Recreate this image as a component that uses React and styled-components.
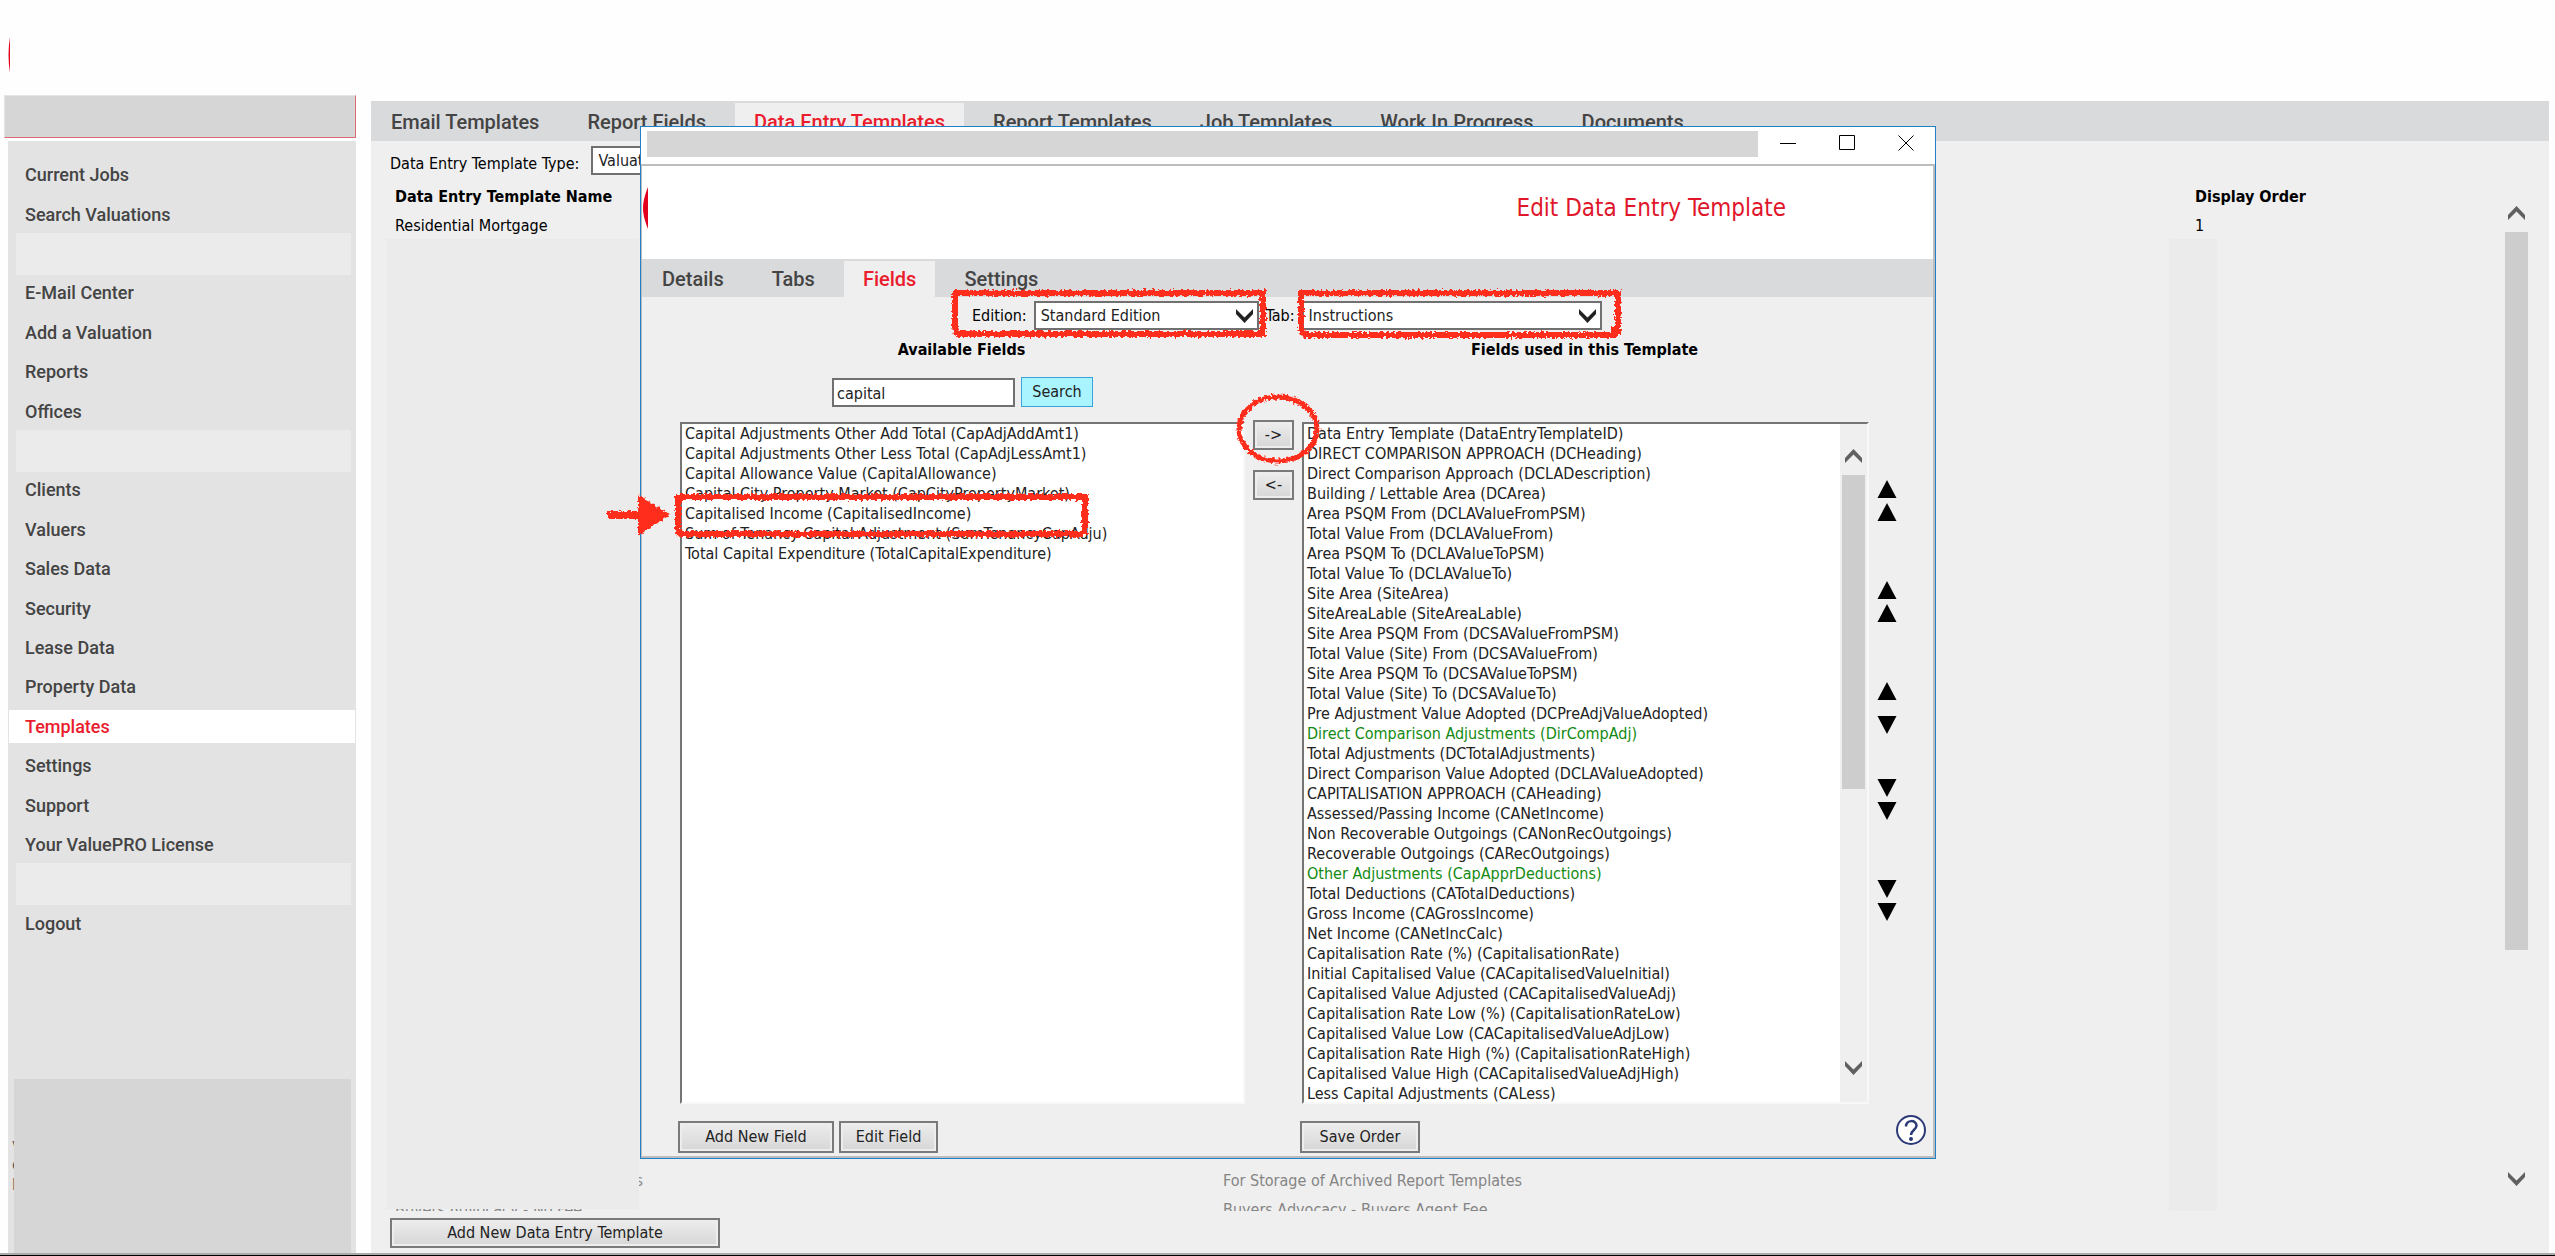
import React from 'react';
import styled, { createGlobalStyle } from 'styled-components';

const GlobalStyle = createGlobalStyle`
  * {
    box-sizing: border-box;
  }

  body {
    margin: 0;
    background: #fefefe;
    color: #000;
    font-family: "DejaVu Sans Condensed", "DejaVu Sans", sans-serif;
    font-size: 16px;
    line-height: 20px;
  }

  button, input, select {
    font: inherit;
    margin: 0;
  }
`;

const Page = styled.div`
  position: relative;
  display: flex;
  flex-direction: column;
  height: 100vh;
  min-height: 1256px;
  overflow: hidden;
  border-bottom: 1px solid #000;
`;

const Banner = styled.header`
  flex: none;
  height: 95px;
  padding: 37px 8px 0;
`;

const Columns = styled.div`
  flex: 1;
  min-height: 0;
  display: flex;
  gap: 15px;
  padding: 0 6px 0 4px;
  border-bottom: 2px solid #aaa;
`;

/* ---- left menu ---- */

const Side = styled.aside`
  flex: none;
  width: 352px;
  display: flex;
  flex-direction: column;
`;

const UserBox = styled.div`
  height: 43px;
  margin-bottom: 3px;
  background: #d6d6d6;
  border: 1px solid #e6e6e6;
  border-right-color: #dc6a74;
  border-bottom-color: #dc6a74;
`;

const Menu = styled.nav`
  flex: 1;
  display: flex;
  flex-direction: column;
  justify-content: space-between;
  margin-left: 4px;
  padding-top: 14px;
  background: #e3e3e3;
`;

const MenuList = styled.ul`
  height: 788px;
  margin: 0;
  padding: 0 1px;
  list-style: none;
  display: grid;
  grid-template-rows: repeat(20, minmax(0, 1fr));
  align-items: center;
`;

const MenuLink = styled.a`
  display: block;
  padding: 0 16px;
  background: ${p => (p.$active ? '#fff' : 'transparent')};
  color: ${p => (p.$active ? '#ea1c2d' : '#444')};
  font-family: Roboto, sans-serif;
  font-size: 18px;
  font-weight: 500;
  line-height: 33px;
  text-decoration: none;
`;

const MenuBlank = styled.div`
  height: 42px;
  margin: 0 4px 0 7px;
  background: #ebebeb;
`;

const MenuFoot = styled.div`
  display: flex;
  height: 174px;
  padding: 0 5px 0 4px;
`;

const FootText = styled.div`
  width: 2px;
  padding-top: 56px;
  overflow: hidden;
  color: #555;
`;

const FootBlock = styled.div`
  flex: 1;
  background: #d6d6d6;
`;

/* ---- tabs, shared by page and dialog ---- */

const TabBar = styled.nav`
  flex: none;
  display: flex;
  gap: 10px;
  height: ${p => p.$height}px;
  padding: 2px 0 0 1px;
  background: #d9dadc;
`;

const Tab = styled.a`
  display: flex;
  align-items: center;
  padding: 0 19px;
  background: ${p => (p.$active ? '#efefef' : 'transparent')};
  color: ${p => (p.$active ? '#ea1c2d' : '#444')};
  font-family: Roboto, sans-serif;
  font-size: 20px;
  font-weight: 500;
  text-decoration: none;
  white-space: nowrap;
`;

/* ---- form parts ---- */

const Button = styled.button`
  height: ${p => p.$height || 32}px;
  width: ${p => (p.$width ? `${p.$width}px` : 'auto')};
  padding: 0;
  border: 2px solid #7a7a7a;
  background: linear-gradient(#ededed, #d6d6d6);
  box-shadow: inset 0 0 0 2px #ededed;
  color: #222;
`;

const SearchButton = styled(Button)`
  border: 1px solid #3aa5dc;
  background: #a9f4ff;
  box-shadow: none;
`;

const SelectWrap = styled.span`
  position: relative;
  display: inline-flex;
  width: ${p => p.$width}px;

  svg {
    position: absolute;
    right: 6px;
    top: 8px;
    pointer-events: none;
  }
`;

const SelectBox = styled.select`
  appearance: none;
  width: 100%;
  height: 29px;
  padding: 0 5px;
  border: 2px solid #707070;
  border-radius: 0;
  background: #fff;
  color: #222;
`;

const TextBox = styled.input`
  width: 183px;
  height: 29px;
  padding: 2px 3px 0;
  border: 2px solid #707070;
  color: #222;
`;

/* ---- page behind the dialog ---- */

const Main = styled.main`
  flex: 1;
  min-width: 0;
  display: flex;
  flex-direction: column;
  margin-top: 6px;
  background: #efefef;
`;

const FilterRow = styled.div`
  display: flex;
  align-items: flex-end;
  gap: 12px;
  padding: 5px 19px 7px;
  line-height: 22px;
`;

const TablePane = styled.div`
  flex: 1 1 0;
  min-height: 0;
  display: flex;
  gap: 15px;
  padding: 0 21px 0 16px;
`;

const TableClip = styled.div`
  position: relative;
  flex: 1;
  overflow: hidden;
`;

const Table = styled.table`
  width: 100%;
  table-layout: fixed;
  border-collapse: collapse;
  text-align: left;

  th, td {
    height: 29px;
    padding: 0 8px;
  }
`;

const NameCol = styled.col`
  width: 828px;
`;

const OrderCol = styled.col`
  width: 303px;
`;

const HiddenRows = styled.tr`
  height: 926px;
`;

const GreyRow = styled.tr`
  color: #858585;
`;

const TailText = styled.span`
  display: block;
  width: 248px;
  text-align: right;
`;

const NameCover = styled.div`
  position: absolute;
  top: 57px;
  bottom: 2px;
  left: 0;
  width: 252px;
  background: #ebebeb;
`;

const OrderCover = styled(NameCover)`
  left: auto;
  right: 273px;
  width: 48px;
  bottom: 0;
`;

const PageActions = styled.div`
  padding: 7px 19px 5px;
`;

const ScrollTrack = styled.div`
  flex: none;
  display: flex;
  flex-direction: column;
  align-items: center;
  width: ${p => p.$width}px;
  padding: ${p => p.$pad};
  background: #efefef;
`;

const Thumb = styled.div`
  width: 23px;
  height: ${p => p.$height}px;
  margin: 12px 0 auto;
  background: #cdcdcd;
`;

/* ---- dialog ---- */

const Dialog = styled.section`
  position: absolute;
  top: 126px;
  left: 640px;
  width: 1296px;
  display: flex;
  flex-direction: column;
  border: 1px solid #1f80c8;
  background: #fff;
`;

const TitleBar = styled.div`
  display: flex;
  align-items: center;
  height: 37px;
  padding-left: 6px;
`;

const TitleText = styled.div`
  flex: 1;
  height: 26px;
  margin-bottom: 3px;
  background: #d6d6d6;
`;

const WindowButton = styled.button`
  width: 59px;
  height: 36px;
  padding: 0;
  border: 0;
  background: none;
`;

const DialogBody = styled.div`
  border: 2px solid #bdbdbd;
  border-left-width: 1px;
`;

const DialogHeader = styled.header`
  display: flex;
  align-items: center;
  justify-content: space-between;
  height: 93px;
  padding: 0 147px 10px 1px;
`;

const DialogTitle = styled.h1`
  margin: 0;
  color: #e0162b;
  font-size: 24px;
  font-weight: 400;
  line-height: 30px;
`;

const Fields = styled.form`
  padding: 4px 7px 3px 36px;
  background: #efefef;
`;

const Pickers = styled.div`
  display: flex;
  align-items: center;
  gap: 7px;
  padding-left: 294px;
`;

const FieldGrid = styled.div`
  display: grid;
  grid-template-columns: 567px 55px 569px 1fr;
  grid-template-rows: 40px 50px auto 49px;
`;

const Heading = styled.h2`
  margin: 0;
  font-size: 16px;
  line-height: 40px;
  text-align: center;
`;

const SearchRow = styled.div`
  display: flex;
  align-items: center;
  justify-content: center;
  gap: 6px;
  padding: 0 0 6px 2px;
`;

const MoveButtons = styled.div`
  display: flex;
  flex-direction: column;
  align-items: center;
  gap: 20px;
  padding-left: 2px;
`;

const ListFrame = styled.div`
  display: flex;
  margin: 2px 0 0 2px;
  height: 682px;
  border: 2px solid #f8f8f8;
  border-top-color: #757575;
  border-left-color: #757575;
`;

const ListBox = styled.select`
  flex: 1;
  height: 100%;
  padding: 0;
  border: 0;
  border-radius: 0;
  outline: 0;
  overflow: hidden;
  background: #fff;
  color: #222;

  option {
    height: 20px;
    min-height: 20px;
    padding: 0 3px;
    line-height: 20px;
  }
`;

const Option = styled.option`
  color: ${p => (p.$group ? '#128a12' : '#222')};
`;

const OrderColumn = styled.div`
  display: flex;
  flex-direction: column;
  gap: 60px;
  padding: 60px 0 0 8px;
`;

const OrderGroup = styled.div`
  display: flex;
  flex-direction: column;
  gap: ${p => (p.$wide ? 16 : 5)}px;
  margin-bottom: ${p => (p.$wide ? -15 : 0)}px;
`;

const OrderButton = styled.button`
  display: block;
  width: 20px;
  height: 18px;
  padding: 0;
  border: 0;
  background: none;

  svg {
    display: block;
  }
`;

const Actions = styled.div`
  display: flex;
  align-items: flex-end;
  gap: 5px;
  ${p => p.$group && `grid-column: span 2;`}
`;

const HelpButton = styled.button`
  align-self: end;
  width: 30px;
  height: 38px;
  margin-left: auto;
  padding: 0;
  border: 0;
  background: none;

  svg {
    display: block;
    margin-bottom: 8px;
  }
`;

const Marks = styled.svg`
  position: absolute;
  inset: 0;
  width: 100%;
  height: 100%;
  overflow: visible;
  pointer-events: none;
`;

const menu = [
  'Current Jobs', 'Search Valuations', null, 'E-Mail Center', 'Add a Valuation',
  'Reports', 'Offices', null, 'Clients', 'Valuers', 'Sales Data', 'Security',
  'Lease Data', 'Property Data', 'Templates', 'Settings', 'Support',
  'Your ValuePRO License', null, 'Logout',
];

const pageTabs = [
  'Email Templates', 'Report Fields', 'Data Entry Templates', 'Report Templates',
  'Job Templates', 'Work In Progress', 'Documents',
];

const dialogTabs = ['Details', 'Tabs', 'Fields', 'Settings'];

const availableFields = [
  'Capital Adjustments Other Add Total (CapAdjAddAmt1)',
  'Capital Adjustments Other Less Total (CapAdjLessAmt1)',
  'Capital Allowance Value (CapitalAllowance)',
  'Capital City Property Market (CapCityPropertyMarket)',
  'Capitalised Income (CapitalisedIncome)',
  'Sum of Tenancy Capital Adjustment (SumTenancyCapAdju)',
  'Total Capital Expenditure (TotalCapitalExpenditure)',
];

const usedFields = [
  'Data Entry Template (DataEntryTemplateID)',
  'DIRECT COMPARISON APPROACH (DCHeading)',
  'Direct Comparison Approach (DCLADescription)',
  'Building / Lettable Area (DCArea)',
  'Area PSQM From (DCLAValueFromPSM)',
  'Total Value From (DCLAValueFrom)',
  'Area PSQM To (DCLAValueToPSM)',
  'Total Value To (DCLAValueTo)',
  'Site Area (SiteArea)',
  'SiteAreaLable (SiteAreaLable)',
  'Site Area PSQM From (DCSAValueFromPSM)',
  'Total Value (Site) From (DCSAValueFrom)',
  'Site Area PSQM To (DCSAValueToPSM)',
  'Total Value (Site) To (DCSAValueTo)',
  'Pre Adjustment Value Adopted (DCPreAdjValueAdopted)',
  'Direct Comparison Adjustments (DirCompAdj)',
  'Total Adjustments (DCTotalAdjustments)',
  'Direct Comparison Value Adopted (DCLAValueAdopted)',
  'CAPITALISATION APPROACH (CAHeading)',
  'Assessed/Passing Income (CANetIncome)',
  'Non Recoverable Outgoings (CANonRecOutgoings)',
  'Recoverable Outgoings (CARecOutgoings)',
  'Other Adjustments (CapApprDeductions)',
  'Total Deductions (CATotalDeductions)',
  'Gross Income (CAGrossIncome)',
  'Net Income (CANetIncCalc)',
  'Capitalisation Rate (%) (CapitalisationRate)',
  'Initial Capitalised Value (CACapitalisedValueInitial)',
  'Capitalised Value Adjusted (CACapitalisedValueAdj)',
  'Capitalisation Rate Low (%) (CapitalisationRateLow)',
  'Capitalised Value Low (CACapitalisedValueAdjLow)',
  'Capitalisation Rate High (%) (CapitalisationRateHigh)',
  'Capitalised Value High (CACapitalisedValueAdjHigh)',
  'Less Capital Adjustments (CALess)',
];

// fields that open a group of their own
const groupFields = ['DirCompAdj', 'CapApprDeductions'];

const orderGroups = [
  ['top', 'up'],
  ['up', 'up'],
  ['up', 'down'],
  ['down', 'down'],
  ['down', 'bottom'],
];

const isUp = dir => dir === 'up' || dir === 'top';

function Chevron({ up, color = '#606060' }) {
  return (
    <svg width="17" height="14" viewBox="0 0 17 14" aria-hidden="true">
      <path
        d={up ? 'M8.5 0 17 9v5L8.5 5.5 0 14V9Z' : 'M8.5 14 17 5V0L8.5 8.5 0 0v5Z'}
        fill={color}
      />
    </svg>
  );
}

function Select({ id, width, value }) {
  return (
    <SelectWrap $width={width}>
      <SelectBox id={id} defaultValue={value}>
        <option>{value}</option>
      </SelectBox>
      <Chevron color="#222" />
    </SelectWrap>
  );
}

function Triangle({ up }) {
  return (
    <svg width="20" height="18" viewBox="0 0 20 18" aria-hidden="true">
      <path d={up ? 'M10 0 19.5 18H.5Z' : 'M.5 0h19L10 18Z'} fill="#000" />
    </svg>
  );
}

function SideMenu() {
  return (
    <Side>
      <UserBox />
      <Menu>
        <MenuList>
          {menu.map((label, i) => (
            <li key={i}>
              {label
                ? <MenuLink href="#" $active={label === 'Templates'}>{label}</MenuLink>
                : <MenuBlank />}
            </li>
          ))}
        </MenuList>
        <MenuFoot>
          <FootText aria-hidden="true">v c l</FootText>
          <FootBlock />
        </MenuFoot>
      </Menu>
    </Side>
  );
}

function TemplatesPage() {
  return (
    <Main>
      <TabBar $height={40}>
        {pageTabs.map(t => (
          <Tab key={t} href="#" $active={t === 'Data Entry Templates'}>{t}</Tab>
        ))}
      </TabBar>

      <FilterRow>
        <label htmlFor="type">Data Entry Template Type:</label>
        <Select id="type" width={240} value="Valuation" />
      </FilterRow>

      <TablePane>
        <TableClip>
          <Table>
            <colgroup>
              <NameCol />
              <col />
              <OrderCol />
            </colgroup>
            <thead>
              <tr>
                <th>Data Entry Template Name</th>
                <th />
                <th>Display Order</th>
              </tr>
            </thead>
            <tbody>
              <tr>
                <td>Residential Mortgage</td>
                <td />
                <td>1</td>
              </tr>
              <HiddenRows><td colSpan={3} /></HiddenRows>
              <GreyRow>
                <td><TailText>s</TailText></td>
                <td>For Storage of Archived Report Templates</td>
                <td />
              </GreyRow>
              <GreyRow>
                <td>Buyers Advocacy - No Fee</td>
                <td>Buyers Advocacy - Buyers Agent Fee</td>
                <td />
              </GreyRow>
            </tbody>
          </Table>
          <NameCover />
          <OrderCover />
        </TableClip>
        <ScrollTrack $width={23} $pad="24px 0 25px">
          <Chevron up />
          <Thumb $height={718} />
          <Chevron />
        </ScrollTrack>
      </TablePane>

      <PageActions>
        <Button $width={330} $height={30}>Add New Data Entry Template</Button>
      </PageActions>
    </Main>
  );
}

// hand-drawn highlights, in the dialog's own coordinates
function Highlights() {
  return (
    <Marks aria-hidden="true">
      <defs>
        <filter
          id="crayon"
          x="-5%"
          y="-20%"
          width="110%"
          height="140%"
          colorInterpolationFilters="sRGB"
        >
          <feTurbulence type="fractalNoise" baseFrequency="0.35" numOctaves="2" seed="4" />
          <feDisplacementMap
            in="SourceGraphic"
            scale="6"
            xChannelSelector="R"
            yChannelSelector="G"
          />
        </filter>
      </defs>
      <g fill="none" stroke="#ff2d1c" strokeWidth="6" filter="url(#crayon)">
        <path d="M312 166h310v41" />
        <path d="M314 165v36l3 6h305v-8" />
        <path d="M658 166h319v42" />
        <path d="M660 165v38l4 5h309v-9" />
        <path d="M35 370h409v37" />
        <path d="M37 369v35l4 3h401" />
        <ellipse cx="637" cy="302" rx="39" ry="32" strokeWidth="5" />
        <path d="M-34 388H0" strokeWidth="8" />
        <path d="M-2 369 27 388-2 407Z" fill="#ff2d1c" strokeWidth="2" />
      </g>
    </Marks>
  );
}

function EditTemplateDialog() {
  return (
    <Dialog role="dialog" aria-label="Edit Data Entry Template">
      <TitleBar>
        <TitleText />
        <WindowButton aria-label="Minimize">
          <svg width="16" height="16" stroke="#000"><path d="M0 8.5h16" /></svg>
        </WindowButton>
        <WindowButton aria-label="Maximize">
          <svg width="16" height="16" stroke="#000" fill="none"><path d="M.5.5h15v14H.5Z" /></svg>
        </WindowButton>
        <WindowButton aria-label="Close">
          <svg width="16" height="16" stroke="#000"><path d="M.5.5l15 15M15.500.5l-15 15" /></svg>
        </WindowButton>
      </TitleBar>

      <DialogBody>
        <DialogHeader>
          <svg width="5" height="42" aria-hidden="true">
            <path d="M5 0C1 10 0 16 0 21s1 11 5 21Z" fill="#e2001f" />
          </svg>
          <DialogTitle>Edit Data Entry Template</DialogTitle>
        </DialogHeader>

        <TabBar $height={38}>
          {dialogTabs.map(t => (
            <Tab key={t} href="#" $active={t === 'Fields'}>{t}</Tab>
          ))}
        </TabBar>

        <Fields onSubmit={e => e.preventDefault()}>
          <Pickers>
            <label htmlFor="edition">Edition:</label>
            <Select id="edition" width={225} value="Standard Edition" />
            <label htmlFor="tab">Tab:</label>
            <Select id="tab" width={300} value="Instructions" />
          </Pickers>

          <FieldGrid>
            <Heading>Available Fields</Heading>
            <span />
            <Heading>Fields used in this Template</Heading>
            <span />

            <SearchRow>
              <TextBox aria-label="Search fields" defaultValue="capital" />
              <SearchButton type="button" $width={72} $height={30}>Search</SearchButton>
            </SearchRow>
            <span />
            <span />
            <span />

            <ListFrame>
              <ListBox multiple aria-label="Available Fields">
                {availableFields.map(f => <Option key={f}>{f}</Option>)}
              </ListBox>
            </ListFrame>
            <MoveButtons>
              <Button type="button" $width={41} $height={30}>-&gt;</Button>
              <Button type="button" $width={41} $height={30}>&lt;-</Button>
            </MoveButtons>
            <ListFrame>
              <ListBox multiple aria-label="Fields used in this Template">
                {usedFields.map(f => (
                  <Option key={f} $group={groupFields.some(g => f.includes(`(${g})`))}>{f}</Option>
                ))}
              </ListBox>
              <ScrollTrack $width={27} $pad="25px 0 27px">
                <Chevron up />
                <Thumb $height={314} />
                <Chevron />
              </ScrollTrack>
            </ListFrame>
            <OrderColumn>
              {orderGroups.map((group, i) => (
                <OrderGroup key={i} $wide={i === 2}>
                  {group.map((dir, j) => (
                    <OrderButton key={j} type="button" aria-label={`Move ${dir}`}>
                      <Triangle up={isUp(dir)} />
                    </OrderButton>
                  ))}
                </OrderGroup>
              ))}
            </OrderColumn>

            <Actions $group>
              <Button type="button" $width={156}>Add New Field</Button>
              <Button type="button" $width={99}>Edit Field</Button>
            </Actions>
            <Actions>
              <Button type="button" $width={120}>Save Order</Button>
            </Actions>
            <HelpButton type="button" aria-label="Help">
              <svg width="30" height="30" viewBox="0 0 30 30" fill="none" stroke="#2c3a78" strokeWidth="2">
                <circle cx="15" cy="15" r="14" fill="#fff" />
                <path d="M10 11.500c0-7 10.500-7 10.500-1 0 4.500-5.500 4.500-5.500 9.500" strokeWidth="2.500" />
                <circle cx="15" cy="24" r="1" />
              </svg>
            </HelpButton>
          </FieldGrid>
        </Fields>
      </DialogBody>
      <Highlights />
    </Dialog>
  );
}

export default function App() {
  return (
    <>
      <GlobalStyle />
      <Page>
        <Banner>
          <svg width="3" height="36" aria-hidden="true">
            <path d="M2 0C0 12 0 24 2 36Z" fill="#e2001f" />
          </svg>
        </Banner>
        <Columns>
          <SideMenu />
          <TemplatesPage />
        </Columns>
        <EditTemplateDialog />
      </Page>
    </>
  );
}
